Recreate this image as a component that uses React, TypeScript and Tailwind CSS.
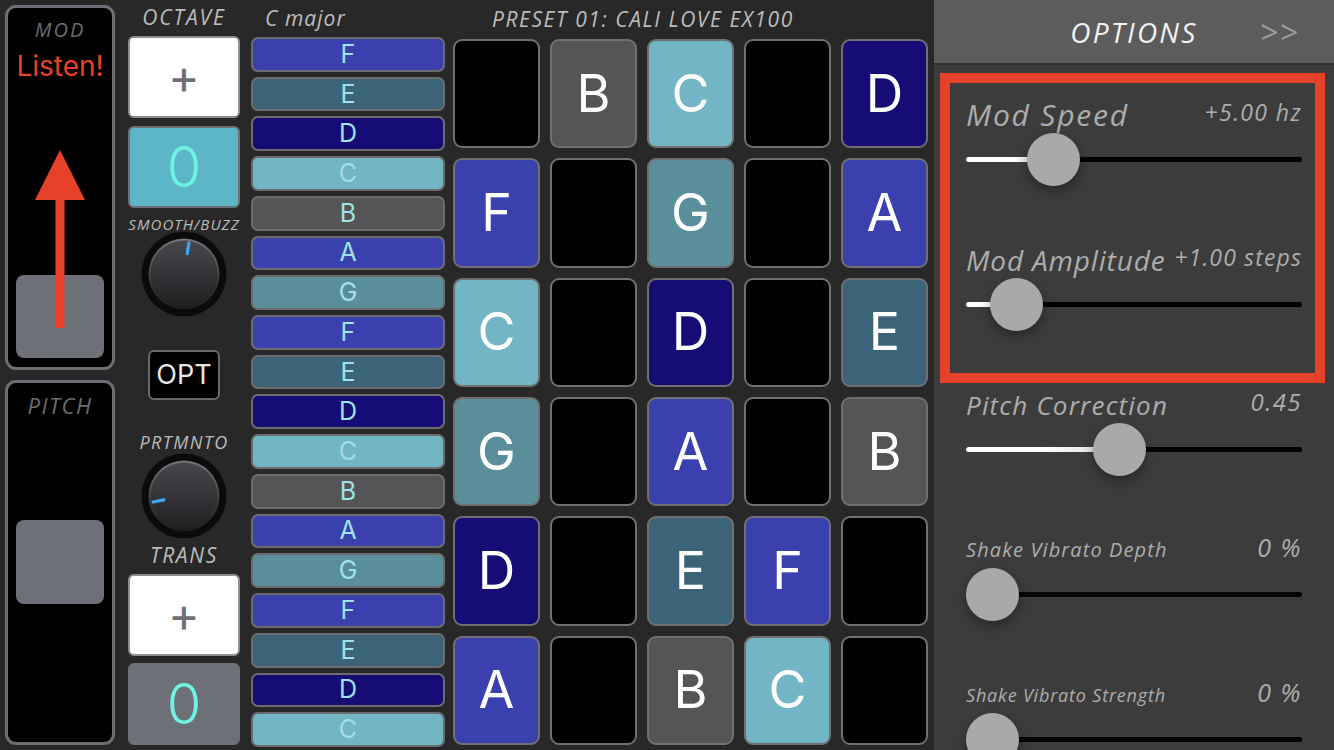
import React from "react";

const ital = "font-['Open_Sans',sans-serif] italic";
const sans = "font-['Inter','Liberation_Sans',sans-serif]";

const noteBg: Record<string, string> = {
  F: "bg-[#3a40ae]",
  A: "bg-[#3a40ae]",
  E: "bg-[#3b6479]",
  D: "bg-[#160c75]",
  C: "bg-[#72b5c5]",
  B: "bg-[#555557]",
  G: "bg-[#5a8e9a]",
  "": "bg-black",
};

const scaleNotes = ["F", "E", "D", "C", "B", "A", "G", "F", "E", "D", "C", "B", "A", "G", "F", "E", "D", "C"];

const gridNotes = [
  ["", "B", "C", "", "D"],
  ["F", "", "G", "", "A"],
  ["C", "", "D", "", "E"],
  ["G", "", "A", "", "B"],
  ["D", "", "E", "F", ""],
  ["A", "", "B", "C", ""],
];

const sliders = [
  { label: "Mod Speed", value: "+5.00 hz", pos: 0.214, size: "text-[30px] tracking-[0.06em]", valSize: "text-[23px] tracking-[0.06em]" },
  { label: "Mod Amplitude", value: "+1.00 steps", pos: 0.086, size: "text-[28px] tracking-[0.03em]", valSize: "text-[23px] tracking-[0.05em]" },
  { label: "Pitch Correction", value: "0.45", pos: 0.45, size: "text-[26px] tracking-[0.045em]", valSize: "text-[24px] tracking-[0.06em]" },
  { label: "Shake Vibrato Depth", value: "0 %", pos: 0, size: "text-[20px] tracking-[0.055em]", valSize: "text-[25px] tracking-[0.06em]" },
  { label: "Shake Vibrato Strength", value: "0 %", pos: 0, size: "text-[18px] tracking-[0.045em]", valSize: "text-[25px] tracking-[0.06em]" },
];

function Knob({ angle, id }: { angle: number; id: string }) {
  return (
    <svg width="86" height="86" viewBox="0 0 86 86">
      <defs>
        <linearGradient id={id + "f"} x1="0" y1="0" x2="0" y2="1">
          <stop offset="0" stopColor="#48484c" />
          <stop offset="1" stopColor="#202023" />
        </linearGradient>
        <linearGradient id={id + "r"} x1="0" y1="0" x2="0" y2="1">
          <stop offset="0" stopColor="#77777c" />
          <stop offset="0.6" stopColor="#3a3a3e" />
          <stop offset="1" stopColor="#1c1c1e" />
        </linearGradient>
        <filter id={id + "g"} x="-50%" y="-50%" width="200%" height="200%">
          <feGaussianBlur stdDeviation="1.6" />
        </filter>
      </defs>
      <circle cx="43" cy="43" r="42.5" fill="#0b0b0b" />
      <circle cx="43" cy="43" r="35.5" fill={`url(#${id}r)`} />
      <circle cx="43" cy="43" r="33.5" fill={`url(#${id}f)`} />
      <g transform={`rotate(${angle} 43 43)`}>
        <line x1="43" y1="11" x2="43" y2="23" stroke="#2f9df2" strokeWidth="5" strokeLinecap="round" filter={`url(#${id}g)`} opacity="0.8" />
        <line x1="43" y1="11.5" x2="43" y2="22.5" stroke="#3aa8f5" strokeWidth="3.2" strokeLinecap="round" />
      </g>
    </svg>
  );
}

function Slider({ pos }: { pos: number }) {
  const x = 26.5 + pos * 283;
  return (
    <div className="relative h-[48px] w-full">
      <div className="absolute left-0 right-0 top-[22px] h-[5px] rounded-full bg-black" />
      <div
        className="absolute left-0 top-[22px] h-[5px] rounded-full bg-gradient-to-r from-white via-white to-[#d8d8d8]"
        style={{ width: x }}
      />
      <div
        className="absolute top-[-2px] h-[53px] w-[53px] rounded-full bg-[#a9a9a9] shadow-[0_5px_12px_rgba(0,0,0,0.35)]"
        style={{ left: x - 26.5 }}
      />
    </div>
  );
}

function SliderBlock({ s, tall }: { s: (typeof sliders)[number]; tall: boolean }) {
  return (
    <div className={`shrink-0 ${tall ? "h-[145px]" : "h-[88px]"}`}>
      <div className="flex h-[40px] items-center justify-between text-[#adadad]">
        <span className={`${ital} ${s.size} leading-none whitespace-nowrap`}>{s.label}</span>
        <span className={`${ital} ${s.valSize} mb-[6px] leading-none whitespace-nowrap`}>{s.value}</span>
      </div>
      <Slider pos={s.pos} />
    </div>
  );
}

function ValueBox({ top, bg }: { top: boolean; bg: string }) {
  if (top) {
    return (
      <div className="flex h-[82px] w-full items-center justify-center rounded-[6px] border-2 border-[#8d8e93] bg-white">
        <span className={`${sans} text-[48px] font-normal leading-none text-[#6e6f77]`}>+</span>
      </div>
    );
  }
  return (
    <div className={`flex h-[82px] w-full items-center justify-center rounded-[6px] border-2 border-[#6e7078] ${bg}`}>
      <span className={`${sans} text-[56px] font-light leading-none text-[#6df3e4]`}>0</span>
    </div>
  );
}

export default function App() {
  return (
    <div className="flex h-[750px] w-[1334px] overflow-hidden bg-[#282828]">
      <div className="flex w-[934px] shrink-0 pl-[5px]">
        {/* mod / pitch strips */}
        <div className="flex w-[110px] shrink-0 flex-col gap-[10px] pt-[5px]">
          <div className="relative flex h-[365px] shrink-0 flex-col items-center rounded-[11px] border-[3px] border-[#6c6f76] bg-black">
            <div className={`${ital} pt-[10px] text-[20px] leading-[24px] tracking-[0.1em] text-[#6d6d6d]`}>MOD</div>
            <div className={`${sans} mt-[9px] text-[28px] leading-[30px] text-[#e8412a]`}>Listen!</div>
            <div className="mt-auto mb-[9px] h-[83px] w-[88px] rounded-[8px] bg-[#6e7078]" />
            <svg className="absolute left-0 top-0" width="104" height="359" viewBox="0 0 104 359">
              <rect x="47.5" y="185" width="9" height="135" fill="#e8412a" />
              <polygon points="52,142 27,192 77,192" fill="#e8412a" />
            </svg>
          </div>
          <div className="flex h-[365px] shrink-0 flex-col items-center rounded-[11px] border-[3px] border-[#6c6f76] bg-black">
            <div className={`${ital} pt-[10px] text-[22px] leading-[24px] tracking-[0.07em] text-[#6d6d6d]`}>PITCH</div>
            <div className="mt-[103px] h-[84px] w-[88px] rounded-[8px] bg-[#6e7078]" />
          </div>
        </div>

        {/* octave / knobs / trans */}
        <div className="ml-[13px] flex w-[112px] shrink-0 flex-col items-center">
          <div className={`${ital} flex h-[36px] items-center text-[21px] tracking-[0.09em] text-[#bcbcbc]`}>OCTAVE</div>
          <ValueBox top bg="" />
          <div className="mt-[8px] w-full">
            <ValueBox top={false} bg="bg-[#5db6c7]" />
          </div>
          <div className={`${ital} mt-[7px] flex h-[18px] items-center text-[15px] tracking-[0.07em] whitespace-nowrap text-[#bcbcbc]`}>SMOOTH/BUZZ</div>
          <div className="mt-[-2px] h-[86px]">
            <Knob angle={9} id="k1" />
          </div>
          <div className={`${sans} mt-[33px] flex h-[50px] w-[72px] items-center justify-center rounded-[6px] border-2 border-[#6b6b6b] bg-black text-[27px] text-[#e6e6e6]`}>
            OPT
          </div>
          <div className={`${ital} mt-[32px] flex h-[20px] items-center text-[18px] tracking-[0.08em] text-[#bcbcbc]`}>PRTMNTO</div>
          <div className="mt-[1px] h-[86px]">
            <Knob angle={259} id="k2" />
          </div>
          <div className={`${ital} mt-[5px] flex h-[24px] items-center text-[21px] tracking-[0.08em] text-[#bcbcbc]`}>TRANS</div>
          <div className="mt-[6px] w-full">
            <ValueBox top bg="" />
          </div>
          <div className="mt-[7px] w-full">
            <ValueBox top={false} bg="bg-[#6e7078]" />
          </div>
        </div>

        {/* scale strip */}
        <div className="ml-[11px] flex w-[194px] shrink-0 flex-col">
          <div className={`${ital} flex h-[37px] items-center pl-[14px] text-[21px] tracking-[0.05em] text-[#bcbcbc]`}>C major</div>
          <div className="flex h-[710px] flex-col gap-[5px]">
            {scaleNotes.map((n, i) => (
              <div
                key={i}
                className={`flex flex-1 items-center justify-center rounded-[7px] border-2 border-[#6c6c6e] ${noteBg[n]}`}
              >
                <span className={`${sans} text-[25px] leading-none ${n === "C" ? "text-[#a9dbe2]" : "text-[#a0e3e9]"}`}>{n}</span>
              </div>
            ))}
          </div>
        </div>

        {/* note grid */}
        <div className="ml-[8px] flex w-[475px] shrink-0 flex-col">
          <div className={`${ital} flex h-[39px] items-center pl-[39px] text-[21px] tracking-[0.075em] text-[#bcbcbc] whitespace-nowrap`}>
            PRESET 01: CALI LOVE EX100
          </div>
          <div className="grid h-[706px] grid-cols-5 grid-rows-6 gap-[10px]">
            {gridNotes.flat().map((n, i) => (
              <div
                key={i}
                className={`flex items-center justify-center rounded-[9px] border-2 border-[#707074] ${noteBg[n]}`}
              >
                <span className={`${sans} text-[52px] leading-none text-white`}>{n}</span>
              </div>
            ))}
          </div>
        </div>
      </div>

      {/* options panel */}
      <div className="flex w-[400px] shrink-0 flex-col overflow-hidden bg-[#3c3c3c]">
        <div className="grid h-[65px] shrink-0 grid-cols-[1fr_auto_1fr] items-center border-b-2 border-[#2d2d2d] bg-[#5c5c5c]">
          <span />
          <span className={`${ital} text-[28px] tracking-[0.08em] text-[#f2f2f2]`}>OPTIONS</span>
          <span className="justify-self-end pr-[34px] font-['Open_Sans',sans-serif] text-[32px] tracking-[0.05em] text-[#9b9b9b]">&gt;&gt;</span>
        </div>
        <div className="mt-[8px] mr-[9px] ml-[6px] shrink-0 border-[10px] border-[#e8412a] pt-[12px] pr-[13px] pb-[45px] pl-[16px]">
          <SliderBlock s={sliders[0]} tall />
          <SliderBlock s={sliders[1]} tall={false} />
        </div>
        <div className="mt-[2px] shrink-0 px-[32px]">
          <SliderBlock s={sliders[2]} tall />
          <SliderBlock s={sliders[3]} tall />
          <SliderBlock s={sliders[4]} tall />
        </div>
      </div>
    </div>
  );
}
